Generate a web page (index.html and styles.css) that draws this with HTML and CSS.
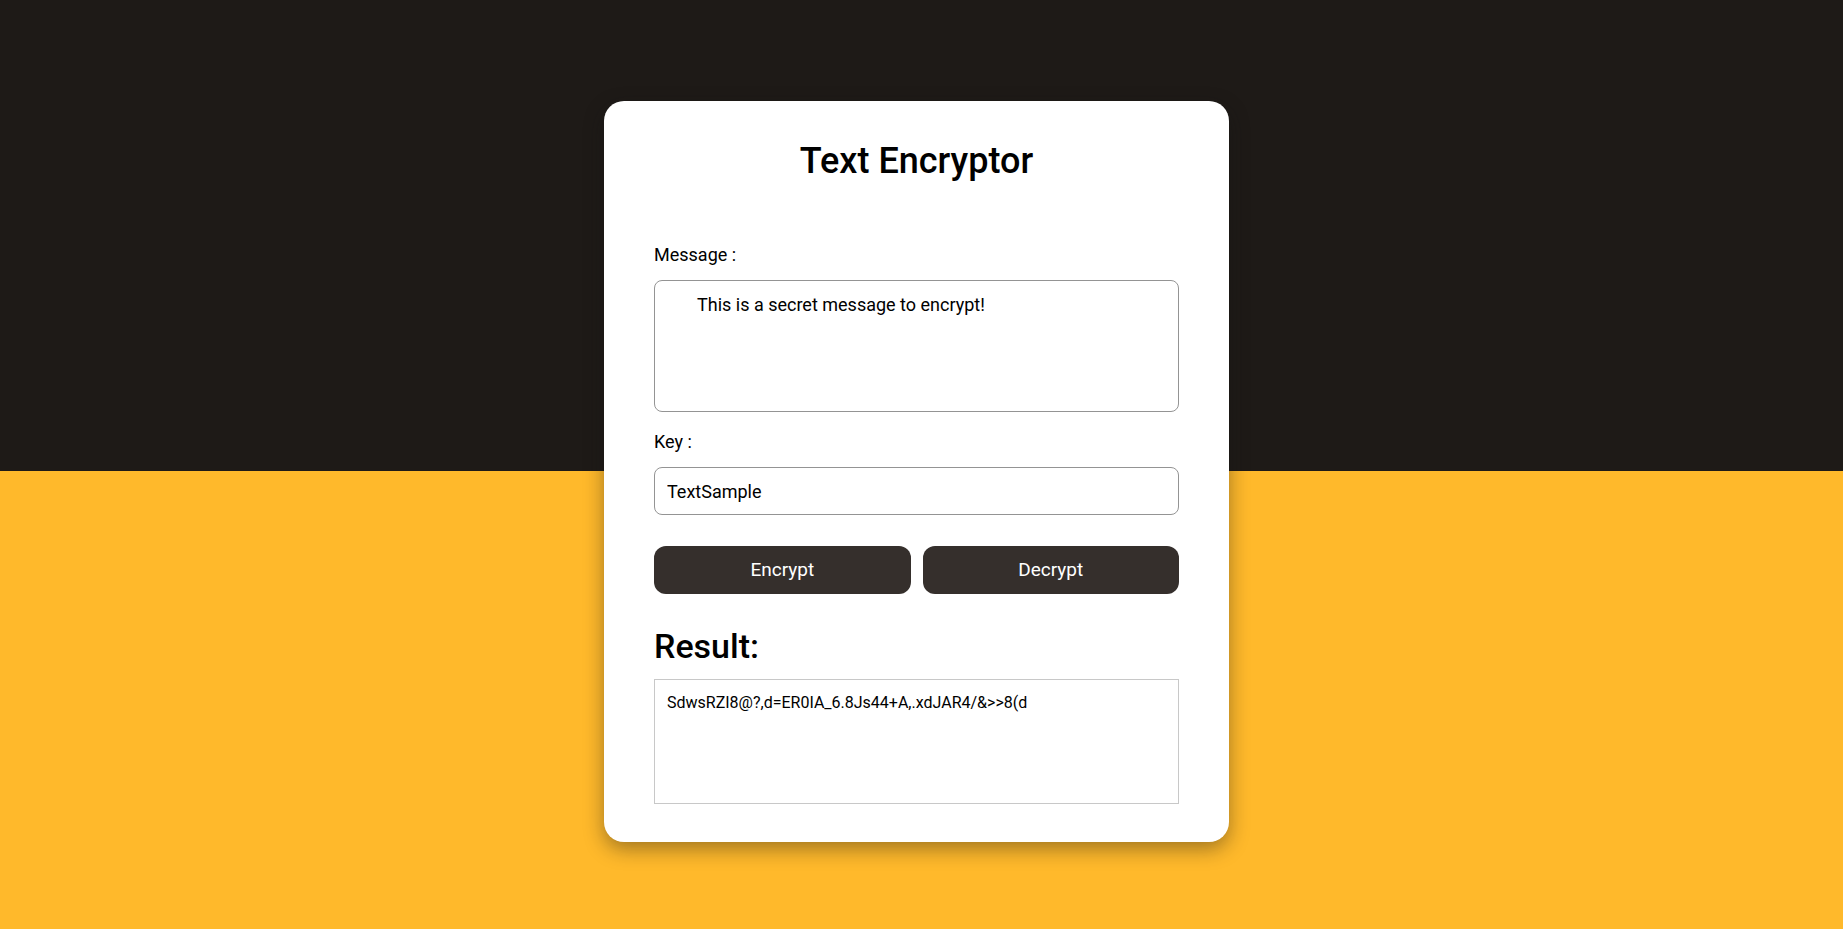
FILE: index.html
```html
<!DOCTYPE html>
<html lang="en">
<head>
<meta charset="utf-8">
<meta name="viewport" content="width=device-width, initial-scale=1">
<title>Text Encryptor</title>
<link rel="stylesheet" href="styles.css">
</head>
<body>
<main class="page">
  <form class="card">
    <h1 class="title">Text Encryptor</h1>
    <label class="label" for="message">Message :</label>
    <textarea class="field message" id="message">This is a secret message to encrypt!</textarea>
    <label class="label" for="key">Key :</label>
    <input class="field key" id="key" type="text" value="TextSample">
    <div class="actions">
      <button class="button" type="button">Encrypt</button>
      <button class="button" type="button">Decrypt</button>
    </div>
    <h2 class="result-title">Result:</h2>
    <output class="result" for="message key">SdwsRZI8@?,d=ER0IA_6.8Js44+A,.xdJAR4/&amp;&gt;&gt;8(d</output>
  </form>
</main>
</body>
</html>
```

FILE: styles.css
```css
* {
  box-sizing: border-box;
}

body {
  margin: 0;
  font-family: Roboto, "Liberation Sans", sans-serif;
  font-size: 18px;
  line-height: 24px;
  color: #000;
}

.page {
  min-height: 100vh;
  padding: 101px 10px 48px 0;
  background: linear-gradient(#1e1a17 471px, #ffb92b 471px);
}

.card {
  display: flex;
  flex-direction: column;
  max-width: 625px;
  margin: 0 auto;
  padding: 38px 50px;
  background: #fff;
  border-radius: 20px;
  box-shadow: 0 7px 20px rgba(20, 20, 20, 0.4);
}

.title {
  margin: 0 0 60px;
  font-size: 36px;
  font-weight: 500;
  line-height: 44px;
  text-align: center;
}

.label {
  margin-bottom: 13px;
}

.field {
  width: 100%;
  padding: 12px;
  border: 1px solid #949494;
  border-radius: 8px;
  background: #fff;
  font: inherit;
  color: inherit;
  outline: none;
}

.message {
  height: 132px;
  margin-bottom: 18px;
  resize: none;
  text-indent: 30px;
}

.key {
  height: 48px;
}

.actions {
  display: grid;
  grid-template-columns: 1fr 1fr;
  gap: 12px;
  margin: 31px 0;
}

.button {
  height: 48px;
  padding: 0;
  border: 0;
  border-radius: 12px;
  background: #352f2c;
  font: inherit;
  font-size: 19px;
  color: #fff;
  cursor: pointer;
}

.result-title {
  margin: 0 0 12px;
  font-size: 34px;
  font-weight: 500;
  line-height: 42px;
}

.result {
  min-height: 125px;
  padding: 11px 12px;
  border: 1px solid #c8c8c8;
  font-size: 16px;
  overflow-wrap: anywhere;
}
```
